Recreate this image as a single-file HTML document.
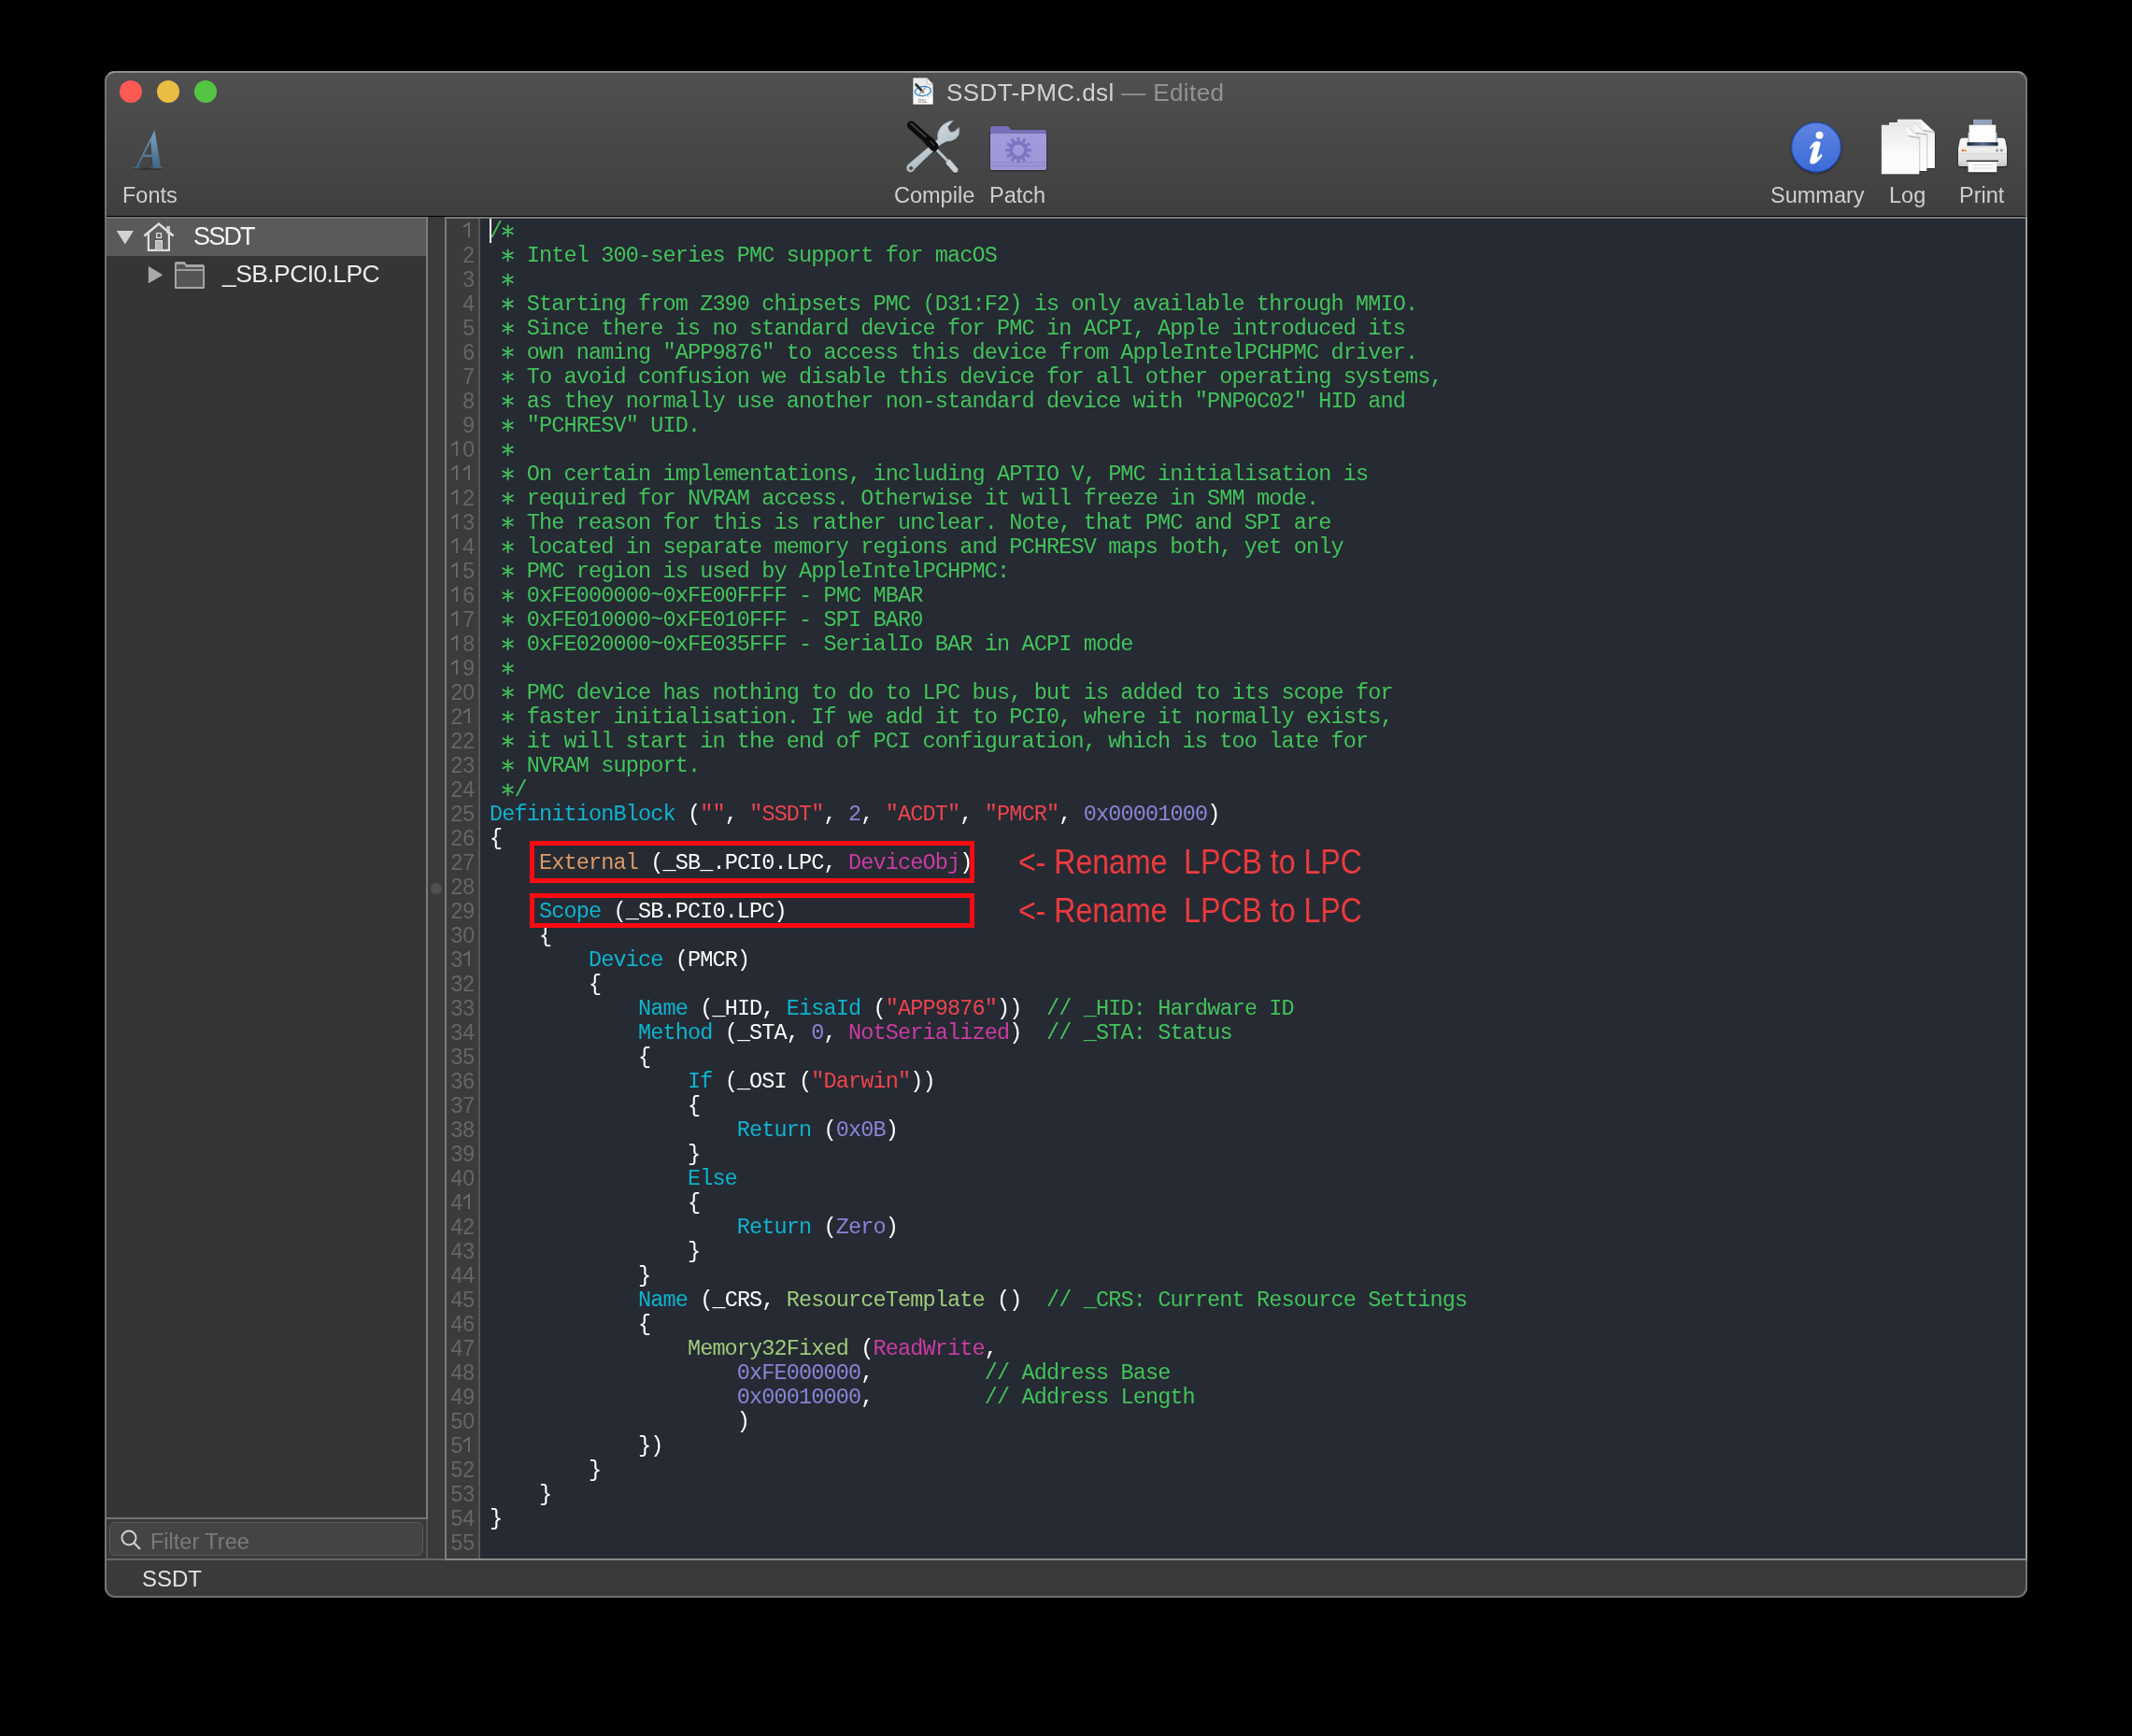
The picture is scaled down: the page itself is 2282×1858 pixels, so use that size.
<!DOCTYPE html>
<html><head><meta charset="utf-8">
<style>
html,body{margin:0;padding:0;background:#000;width:2282px;height:1858px;overflow:hidden;}
body{position:relative;font-family:"Liberation Sans",sans-serif;-webkit-font-smoothing:antialiased;}
.tlabel,.title,.code,.gut,.ann,.abs{will-change:transform;}
.abs{position:absolute;}
#win{position:absolute;left:112px;top:76px;width:2058px;height:1634px;border-radius:11px;background:#3a3a3a;overflow:hidden;}
#winborder{position:absolute;left:112px;top:76px;width:2054px;height:1630px;border:2px solid #767676;border-top-color:#8e8e8e;border-bottom-color:#6e6e6e;border-radius:11px;pointer-events:none;}
#toolbar{position:absolute;left:0;top:0;width:2058px;height:155px;background:linear-gradient(#505050,#3f3f3f);}
#tbline{position:absolute;left:0;top:155px;width:2058px;height:1px;background:#000;}
.title{position:absolute;top:84px;font-size:26px;letter-spacing:0.4px;color:#d2d2d2;white-space:nowrap;line-height:30px;}
.tlabel{position:absolute;top:196px;font-size:23.5px;color:#cfcfcf;white-space:nowrap;line-height:26px;}
#sidebar{position:absolute;left:114px;top:232px;width:342px;height:1392px;background:#353535;}
.code{position:absolute;left:524px;top:235px;font-family:"Liberation Mono",monospace;font-size:23.5px;letter-spacing:-0.86px;line-height:26px;color:#fff;white-space:pre;margin:0;}
.gut{position:absolute;left:478px;top:234px;width:30px;font-size:23px;line-height:26px;color:#666;text-align:right;white-space:pre;}
.ann{font-size:36.5px;line-height:40px;color:#f03b3e;white-space:nowrap;transform-origin:0 0;transform:scaleX(0.878);}
.ax{color:transparent}
.d1{display:inline-block;vertical-align:top;}
.c{color:#41c35a}.k{color:#0db4cf}.s{color:#f0434d}.n{color:#8a84d6}.o{color:#dc9a66}.m{color:#c93ca2}.g{color:#9dcb79}
</style></head><body>
<div id="win">
  <div id="toolbar"></div>
  <div id="tbline"></div>
</div>
<div id="winborder"></div>

<!-- traffic lights -->
<div class="abs" style="left:128px;top:86px;width:24px;height:24px;border-radius:50%;background:#fe5a54;"></div>
<div class="abs" style="left:168px;top:86px;width:24px;height:24px;border-radius:50%;background:#e9bd44;"></div>
<div class="abs" style="left:208px;top:86px;width:24px;height:24px;border-radius:50%;background:#54c443;"></div>


<!-- ICONS -->
<!-- title doc icon -->
<svg class="abs" style="left:970px;top:78px" width="40" height="40" viewBox="0 0 40 40">
 <defs><linearGradient id="docg" x1="0" y1="0" x2="0" y2="1"><stop offset="0" stop-color="#e6e6e6"/><stop offset="1" stop-color="#ffffff"/></linearGradient></defs>
 <path d="M7 5 L21.7 5 L29 12.4 L29 34 L7 34 Z" fill="url(#docg)" stroke="#3a3a3a" stroke-width="0.6"/>
 <path d="M21.7 5 L22.5 11.8 L29 12.4 Z" fill="#fafafa" stroke="#9a9a9a" stroke-width="0.6"/>
 <ellipse cx="17.9" cy="19.6" rx="8.6" ry="5" fill="none" stroke="#2f86d4" stroke-width="1.3" transform="rotate(-8 17.9 19.6)"/>
 <path d="M10.5 12.5 L17.5 20" stroke="#333" stroke-width="2.6" stroke-linecap="round"/>
 <path d="M13 24 L21.5 15" stroke="#aaa" stroke-width="1.4"/>
 <path d="M18 21 L24 26" stroke="#bbb" stroke-width="1"/>
 <text x="17.5" y="31.8" font-family="Liberation Sans" font-size="5" fill="#666" text-anchor="middle">DSL</text>
</svg>

<!-- Fonts A -->
<svg class="abs" style="left:140px;top:137px" width="40" height="46" viewBox="0 0 40 46">
 <defs><linearGradient id="ag" x1="0" y1="0" x2="0" y2="1"><stop offset="0" stop-color="#7aa2c4"/><stop offset="1" stop-color="#3f6686"/></linearGradient></defs>
 <ellipse cx="18.6" cy="43.6" rx="17.5" ry="1.2" fill="#222" opacity="0.6"/>
 <path d="M25.5 2.4 L32.1 41.9 L35.3 42.4 L35.3 43.3 L20.5 43.3 L20.5 42.4 L23.8 41.9 L22.8 30.9 L12.9 30.9 L7.8 41.9 L11.5 42.4 L11.5 43.3 L1.9 43.3 L1.9 42.4 L5.3 41.9 Z M21.3 14.2 L22.6 28.6 L14.1 28.6 Z" fill="url(#ag)" fill-rule="evenodd"/>
</svg>

<!-- Compile: screwdriver + wrench -->
<svg class="abs" style="left:965px;top:125px" width="70" height="65" viewBox="0 0 70 65">
 <defs>
  <linearGradient id="wg" x1="0" y1="0" x2="0.6" y2="1"><stop offset="0" stop-color="#dde9ef"/><stop offset="1" stop-color="#a7b3ba"/></linearGradient>
  <filter id="csh" x="-10%" y="-10%" width="120%" height="120%"><feDropShadow dx="0" dy="0.6" stdDeviation="0.6" flood-color="#000" flood-opacity="0.55"/></filter>
 </defs>
 <g filter="url(#csh)">
 <!-- wrench -->
 <path d="M6.5 51.5 L27 34 L35 28 L38.5 24 C38 20 38.5 16 41 12.5 C44 8 49.5 4.5 55.4 4.1 L49.8 10.5 C50 13.5 51 15.5 53.2 16.3 C56 16.5 58 14.5 61.4 11.2 C62.5 15 62 19 59.5 22 C56.5 25.5 52 26.5 48.7 26.2 C45 27.5 41 30.5 38.9 32.2 L24.2 46 L14 56 C12.5 59.5 9.5 60 7 58.5 C5 57 5 53.5 6.5 51.5 Z" fill="url(#wg)" stroke="#7c8a92" stroke-width="0.7"/>
 <circle cx="10.1" cy="55" r="2.1" fill="#454545" stroke="#7c8a92" stroke-width="0.5"/>
 <!-- screwdriver shaft + tip -->
 <path d="M36.5 34 L49.5 47.5" stroke="#b9c4ca" stroke-width="3" />
 <path d="M48.5 46.5 L51.5 45.5 L60.5 56 L59.5 59.5 L56 59.5 L47.5 50 Z" fill="#cdd3d6" stroke="#8c969c" stroke-width="0.5"/>
 <!-- handle -->
 <path d="M10.3 8.7 L27.5 24" stroke="#101010" stroke-width="8.6" stroke-linecap="round"/>
 <path d="M10 7.2 L26.5 22" stroke="#6a6a6a" stroke-width="1.4" stroke-linecap="round" opacity="0.7"/>
 <path d="M29 25.5 L34.8 32" stroke="#080808" stroke-width="9.6" stroke-linecap="round"/>
 <path d="M30.5 26 L35 30.5" stroke="#555" stroke-width="1.6" stroke-linecap="round" opacity="0.7"/>
 </g>
</svg>

<!-- Patch: purple folder with gear -->
<svg class="abs" style="left:1055px;top:130px" width="70" height="60" viewBox="0 0 70 60">
 <defs>
  <linearGradient id="fg" x1="0" y1="0" x2="0" y2="1"><stop offset="0" stop-color="#a29cdc"/><stop offset="1" stop-color="#9c96d6"/></linearGradient>
  <filter id="fsh" x="-10%" y="-10%" width="120%" height="130%"><feDropShadow dx="0" dy="0.8" stdDeviation="0.8" flood-color="#000" flood-opacity="0.5"/></filter>
 </defs>
 <g filter="url(#fsh)">
 <path d="M5 7 Q5 5 7 5 L23 5 Q24.5 5 25.5 6.5 L27 9 L63 9 Q65 9 65 11 L65 16 L5 16 Z" fill="#7670b6"/>
 <rect x="5" y="13" width="60" height="39" rx="2.5" fill="url(#fg)"/>
 </g>
 <path d="M5 44 L65 44 M5 47.5 L65 47.5" stroke="#8a84c4" stroke-width="1"/>
 <g transform="translate(35,30.7)" fill="#7d76c2">
  <circle r="9.9"/>
  <g id="teeth">
   <rect x="-1.55" y="-14" width="3.1" height="5.5" rx="1"/>
   <rect x="-1.55" y="-14" width="3.1" height="5.5" rx="1" transform="rotate(30)"/>
   <rect x="-1.55" y="-14" width="3.1" height="5.5" rx="1" transform="rotate(60)"/>
   <rect x="-1.55" y="-14" width="3.1" height="5.5" rx="1" transform="rotate(90)"/>
   <rect x="-1.55" y="-14" width="3.1" height="5.5" rx="1" transform="rotate(120)"/>
   <rect x="-1.55" y="-14" width="3.1" height="5.5" rx="1" transform="rotate(150)"/>
   <rect x="-1.55" y="-14" width="3.1" height="5.5" rx="1" transform="rotate(180)"/>
   <rect x="-1.55" y="-14" width="3.1" height="5.5" rx="1" transform="rotate(210)"/>
   <rect x="-1.55" y="-14" width="3.1" height="5.5" rx="1" transform="rotate(240)"/>
   <rect x="-1.55" y="-14" width="3.1" height="5.5" rx="1" transform="rotate(270)"/>
   <rect x="-1.55" y="-14" width="3.1" height="5.5" rx="1" transform="rotate(300)"/>
   <rect x="-1.55" y="-14" width="3.1" height="5.5" rx="1" transform="rotate(330)"/>
  </g>
  <circle r="6.0" fill="#a19bdb"/>
 </g>
</svg>

<!-- Summary: info circle -->
<svg class="abs" style="left:1910px;top:124px" width="70" height="70" viewBox="0 0 70 70">
 <defs>
  <linearGradient id="ig" x1="0" y1="0" x2="0" y2="1"><stop offset="0" stop-color="#5e85e1"/><stop offset="1" stop-color="#3b6ad7"/></linearGradient>
  <filter id="ish" x="-20%" y="-20%" width="140%" height="140%"><feDropShadow dx="0" dy="1" stdDeviation="1" flood-color="#000" flood-opacity="0.6"/></filter>
 </defs>
 <circle cx="34" cy="33.6" r="26.3" fill="url(#ig)" stroke="#1e4fc4" stroke-width="1.1" filter="url(#ish)"/>
 <circle cx="37.5" cy="20.8" r="4" fill="#fff"/>
 <path d="M27 34.3 C29 31 31 28 33.5 27.4 C36 27 38.8 27.6 38.6 29.8 L34.8 44.6 C36.2 43.8 38 42.3 39.7 40.4 L40.3 43.2 C37.5 47.5 33.5 51.5 29.8 51.6 C27.4 51.6 26.7 49.6 27.4 47 L31.3 32.8 C30.2 33.5 28.7 34.8 27.7 35.6 Z" fill="#fff"/>
</svg>

<!-- Log: stacked pages -->
<svg class="abs" style="left:2005px;top:120px" width="80" height="75" viewBox="0 0 80 75">
 <defs>
  <linearGradient id="pg" x1="0" y1="0" x2="0" y2="1"><stop offset="0" stop-color="#e9e9e9"/><stop offset="0.6" stop-color="#fbfbfb"/><stop offset="1" stop-color="#ffffff"/></linearGradient>
  <filter id="psh" x="-20%" y="-20%" width="140%" height="140%"><feDropShadow dx="0.5" dy="0.5" stdDeviation="0.6" flood-color="#000" flood-opacity="0.55"/></filter>
 </defs>
 <g filter="url(#psh)">
  <path d="M25.9 7.8 L51 7.8 L65.9 21.6 L65.9 60 L25.9 60 Z" fill="url(#pg)"/>
  <path d="M51 7.8 L53.5 19.5 L65.9 21.6 Z" fill="#f7f7f7"/>
  <path d="M53.5 19.5 L65.9 21.6" stroke="#9a9a9a" stroke-width="0.9"/>
 </g>
 <g filter="url(#psh)">
  <path d="M17 11 L42.8 11 L57.2 24 L57.2 63 L17 63 Z" fill="url(#pg)"/>
  <path d="M42.8 11 L45.5 22.3 L57.2 24 Z" fill="#f7f7f7"/>
  <path d="M45.5 22.3 L57.2 24" stroke="#9a9a9a" stroke-width="0.9"/>
 </g>
 <g filter="url(#psh)">
  <path d="M8.9 13.8 L34.1 13.8 L49.2 27.6 L49.2 66.3 L8.9 66.3 Z" fill="url(#pg)"/>
  <path d="M34.1 13.8 L37.5 25.6 L49.2 27.6 Z" fill="#f7f7f7"/>
  <path d="M37.5 25.6 L49.2 27.6" stroke="#9a9a9a" stroke-width="0.9"/>
 </g>
</svg>

<!-- Print: printer -->
<svg class="abs" style="left:2092px;top:124px" width="62" height="66" viewBox="0 0 62 66">
 <defs>
  <linearGradient id="prg" x1="0" y1="0" x2="0" y2="1"><stop offset="0" stop-color="#fafafa"/><stop offset="0.45" stop-color="#ededed"/><stop offset="0.8" stop-color="#dcdcdc"/><stop offset="1" stop-color="#c4c4c4"/></linearGradient>
  <linearGradient id="slot" x1="0" y1="0" x2="1" y2="0"><stop offset="0" stop-color="#17202e"/><stop offset="0.5" stop-color="#4f6a8e"/><stop offset="1" stop-color="#17202e"/></linearGradient>
  <filter id="prsh" x="-20%" y="-20%" width="140%" height="140%"><feDropShadow dx="0" dy="0.8" stdDeviation="0.8" flood-color="#000" flood-opacity="0.6"/></filter>
 </defs>
 <g filter="url(#prsh)">
  <rect x="20" y="3.9" width="20.1" height="5.8" fill="#93a3bd"/>
  <path d="M8.5 23.8 L51.5 23.8 Q53.5 23.8 54.2 26 L56 35 L56 51.5 Q56 54 53 54 L7 54 Q4 54 4 51.5 L4 35 L5.8 26 Q6.5 23.8 8.5 23.8 Z" fill="url(#prg)"/>
  <rect x="14.4" y="18" width="31.2" height="10.5" fill="#a9b8cc"/>
  <rect x="15.7" y="9.7" width="28.5" height="18.6" fill="#fdfdfd"/>
  <rect x="13.5" y="28.3" width="33.1" height="3.6" fill="url(#slot)"/>
  <rect x="13.5" y="31.9" width="33.1" height="1.6" fill="#d4d4d4"/>
  <rect x="14.7" y="48.8" width="30.5" height="11.3" fill="#fafafa"/>
 </g>
 <path d="M4.5 40.5 L55.5 40.5" stroke="#d6d6d6" stroke-width="1.2"/>
 <circle cx="8.9" cy="37" r="1.3" fill="#ee6a3c"/><circle cx="11.7" cy="37" r="1.3" fill="#f0a040"/>
 <circle cx="45.6" cy="37" r="1.1" fill="none" stroke="#555" stroke-width="0.7"/><circle cx="50.4" cy="37" r="1.1" fill="none" stroke="#555" stroke-width="0.7"/>
 <rect x="12.9" y="47.6" width="34.1" height="1.4" fill="#2a2a2a"/>
 <path d="M20 52.5 L41 52.5 M20 56 L41 56" stroke="#dadada" stroke-width="1.2"/>
</svg>

<!-- title -->
<div class="title" style="left:1013px;">SSDT-PMC.dsl <span style="color:#939393">— Edited</span></div>

<!-- toolbar labels -->
<div class="tlabel" style="left:131px;">Fonts</div>
<div class="tlabel" style="left:957px;">Compile</div>
<div class="tlabel" style="left:1059px;">Patch</div>
<div class="tlabel" style="left:1895px;">Summary</div>
<div class="tlabel" style="left:2022px;">Log</div>
<div class="tlabel" style="left:2097px;">Print</div>

<!-- sidebar -->
<div id="sidebar"></div>

<!-- gutter + code -->
<div class="abs" style="left:458px;top:232px;width:18px;height:1437px;background:#3a3a3a;"></div>
<div class="abs" style="left:476px;top:232px;width:1690px;height:1434px;border:2px solid #7a7a7a;border-right-color:#9a9a9a;border-bottom-color:#8a8a8a;border-left-color:#7a7a7a;background:#262a33;"></div>
<div class="abs" style="left:478px;top:234px;width:34px;height:1434px;background:#3b3b3b;"></div>
<div class="abs" style="left:512px;top:234px;width:2px;height:1434px;background:#575757;"></div>

<div class="gut"><svg class="d1" width="12.79" height="26" viewBox="0 0 12.79 26"><path d="M1.1 9 L7 4.8 L7 20" fill="none" stroke="#707070" stroke-width="1.7"/></svg>
2
3
4
5
6
7
8
9
<svg class="d1" width="12.79" height="26" viewBox="0 0 12.79 26"><path d="M1.1 9 L7 4.8 L7 20" fill="none" stroke="#707070" stroke-width="1.7"/></svg>0
<svg class="d1" width="12.79" height="26" viewBox="0 0 12.79 26"><path d="M1.1 9 L7 4.8 L7 20" fill="none" stroke="#707070" stroke-width="1.7"/></svg><svg class="d1" width="12.79" height="26" viewBox="0 0 12.79 26"><path d="M1.1 9 L7 4.8 L7 20" fill="none" stroke="#707070" stroke-width="1.7"/></svg>
<svg class="d1" width="12.79" height="26" viewBox="0 0 12.79 26"><path d="M1.1 9 L7 4.8 L7 20" fill="none" stroke="#707070" stroke-width="1.7"/></svg>2
<svg class="d1" width="12.79" height="26" viewBox="0 0 12.79 26"><path d="M1.1 9 L7 4.8 L7 20" fill="none" stroke="#707070" stroke-width="1.7"/></svg>3
<svg class="d1" width="12.79" height="26" viewBox="0 0 12.79 26"><path d="M1.1 9 L7 4.8 L7 20" fill="none" stroke="#707070" stroke-width="1.7"/></svg>4
<svg class="d1" width="12.79" height="26" viewBox="0 0 12.79 26"><path d="M1.1 9 L7 4.8 L7 20" fill="none" stroke="#707070" stroke-width="1.7"/></svg>5
<svg class="d1" width="12.79" height="26" viewBox="0 0 12.79 26"><path d="M1.1 9 L7 4.8 L7 20" fill="none" stroke="#707070" stroke-width="1.7"/></svg>6
<svg class="d1" width="12.79" height="26" viewBox="0 0 12.79 26"><path d="M1.1 9 L7 4.8 L7 20" fill="none" stroke="#707070" stroke-width="1.7"/></svg>7
<svg class="d1" width="12.79" height="26" viewBox="0 0 12.79 26"><path d="M1.1 9 L7 4.8 L7 20" fill="none" stroke="#707070" stroke-width="1.7"/></svg>8
<svg class="d1" width="12.79" height="26" viewBox="0 0 12.79 26"><path d="M1.1 9 L7 4.8 L7 20" fill="none" stroke="#707070" stroke-width="1.7"/></svg>9
20
2<svg class="d1" width="12.79" height="26" viewBox="0 0 12.79 26"><path d="M1.1 9 L7 4.8 L7 20" fill="none" stroke="#707070" stroke-width="1.7"/></svg>
22
23
24
25
26
27
28
29
30
3<svg class="d1" width="12.79" height="26" viewBox="0 0 12.79 26"><path d="M1.1 9 L7 4.8 L7 20" fill="none" stroke="#707070" stroke-width="1.7"/></svg>
32
33
34
35
36
37
38
39
40
4<svg class="d1" width="12.79" height="26" viewBox="0 0 12.79 26"><path d="M1.1 9 L7 4.8 L7 20" fill="none" stroke="#707070" stroke-width="1.7"/></svg>
42
43
44
45
46
47
48
49
50
5<svg class="d1" width="12.79" height="26" viewBox="0 0 12.79 26"><path d="M1.1 9 L7 4.8 L7 20" fill="none" stroke="#707070" stroke-width="1.7"/></svg>
52
53
54
55</div>

<pre class="code"><span class="c">/<span class="ax">*</span>
 <span class="ax">*</span> Intel 300-series PMC support for macOS
 <span class="ax">*</span>
 <span class="ax">*</span> Starting from Z390 chipsets PMC (D31:F2) is only available through MMIO.
 <span class="ax">*</span> Since there is no standard device for PMC in ACPI, Apple introduced its
 <span class="ax">*</span> own naming "APP9876" to access this device from AppleIntelPCHPMC driver.
 <span class="ax">*</span> To avoid confusion we disable this device for all other operating systems,
 <span class="ax">*</span> as they normally use another non-standard device with "PNP0C02" HID and
 <span class="ax">*</span> "PCHRESV" UID.
 <span class="ax">*</span>
 <span class="ax">*</span> On certain implementations, including APTIO V, PMC initialisation is
 <span class="ax">*</span> required for NVRAM access. Otherwise it will freeze in SMM mode.
 <span class="ax">*</span> The reason for this is rather unclear. Note, that PMC and SPI are
 <span class="ax">*</span> located in separate memory regions and PCHRESV maps both, yet only
 <span class="ax">*</span> PMC region is used by AppleIntelPCHPMC:
 <span class="ax">*</span> 0xFE000000~0xFE00FFFF - PMC MBAR
 <span class="ax">*</span> 0xFE010000~0xFE010FFF - SPI BAR0
 <span class="ax">*</span> 0xFE020000~0xFE035FFF - SerialIo BAR in ACPI mode
 <span class="ax">*</span>
 <span class="ax">*</span> PMC device has nothing to do to LPC bus, but is added to its scope for
 <span class="ax">*</span> faster initialisation. If we add it to PCI0, where it normally exists,
 <span class="ax">*</span> it will start in the end of PCI configuration, which is too late for
 <span class="ax">*</span> NVRAM support.
 <span class="ax">*</span>/</span>
<span class="k">DefinitionBlock</span> (<span class="s">""</span>, <span class="s">"SSDT"</span>, <span class="n">2</span>, <span class="s">"ACDT"</span>, <span class="s">"PMCR"</span>, <span class="n">0x00001000</span>)
{
    <span class="o">External</span> (_SB_.PCI0.LPC, <span class="m">DeviceObj</span>)

    <span class="k">Scope</span> (_SB.PCI0.LPC)
    {
        <span class="k">Device</span> (PMCR)
        {
            <span class="k">Name</span> (_HID, <span class="k">EisaId</span> (<span class="s">"APP9876"</span>))  <span class="c">// _HID: Hardware ID</span>
            <span class="k">Method</span> (_STA, <span class="n">0</span>, <span class="m">NotSerialized</span>)  <span class="c">// _STA: Status</span>
            {
                <span class="k">If</span> (_OSI (<span class="s">"Darwin"</span>))
                {
                    <span class="k">Return</span> (<span class="n">0x0B</span>)
                }
                <span class="k">Else</span>
                {
                    <span class="k">Return</span> (<span class="n">Zero</span>)
                }
            }
            <span class="k">Name</span> (_CRS, <span class="g">ResourceTemplate</span> ()  <span class="c">// _CRS: Current Resource Settings</span>
            {
                <span class="g">Memory32Fixed</span> (<span class="m">ReadWrite</span>,
                    <span class="n">0xFE000000</span>,         <span class="c">// Address Base</span>
                    <span class="n">0x00010000</span>,         <span class="c">// Address Length</span>
                    )
            })
        }
    }
}
</pre>


<!-- sidebar items -->
<div class="abs" style="left:112px;top:232px;width:346px;height:1394px;box-sizing:border-box;border:2px solid #727272;border-right-color:#7c7c7c;background:#353535;"></div>
<div class="abs" style="left:114px;top:234px;width:342px;height:40px;background:#5a5a5a;"></div>
<svg class="abs" style="left:124px;top:246px" width="20" height="17"><polygon points="0.8,0.9 18.9,0.9 9.9,15.5" fill="#d2d2d2"/></svg>
<svg class="abs" style="left:152px;top:237px" width="36" height="34" viewBox="0 0 36 34">
 <path d="M5.8 13.5 L17.9 3.5 L30 13.5 L30 31 L5.8 31 Z" fill="#5c5f5f"/>
 <rect x="26.3" y="5" width="3.7" height="8" fill="#c9c9c9"/>
 <path d="M2.4 15.6 L17.9 2.6 L33.6 15.6" fill="none" stroke="#dedede" stroke-width="2.6" stroke-linejoin="miter"/>
 <path d="M6.9 13 L6.9 30.8 L28.9 30.8 L28.9 13" fill="none" stroke="#dedede" stroke-width="2.2"/>
 <rect x="15.7" y="12.6" width="4.8" height="4.8" fill="#555" stroke="#dedede" stroke-width="1.3"/>
 <rect x="14.7" y="20.5" width="6.8" height="10.5" fill="#bababa" stroke="#dedede" stroke-width="1"/>
</svg>
<svg class="abs" style="left:158px;top:284px" width="17" height="20"><polygon points="0.9,0.9 15.8,10 0.9,19.2" fill="#b4b4b4"/></svg>
<svg class="abs" style="left:185.5px;top:280px" width="34" height="30" viewBox="0 0 35 30" preserveAspectRatio="none">
 <path d="M2 2.2 Q2 1.2 3 1.2 L11.5 1.2 L13.8 4.2 L32 4.2 Q33 4.2 33 5.2 L33 27.2 Q33 28.2 32 28.2 L3 28.2 Q2 28.2 2 27.2 Z" fill="#3e4040" stroke="#c4c4c4" stroke-width="1.8"/>
 <rect x="2.9" y="8.4" width="29.2" height="19" fill="#5a5d5d"/>
 <path d="M2 8.4 L33 8.4" stroke="#c4c4c4" stroke-width="1.6"/>
</svg>
<div class="abs" style="left:207px;top:238px;font-size:27px;line-height:30px;letter-spacing:-1.8px;color:#f4f4f4;">SSDT</div>
<svg class="abs" style="left:158px;top:285px" width="17" height="19"><polygon points="1,1 16,9.5 1,18" fill="#a9a9a9"/></svg>
<svg class="abs" style="left:185.5px;top:280px" width="34" height="30" viewBox="0 0 35 30" preserveAspectRatio="none">
 <path d="M2 3 Q2 2 3 2 L12 2 L14 5 L32 5 Q33 5 33 6 L33 27 Q33 28 32 28 L3 28 Q2 28 2 27 Z" fill="#555" stroke="#a6a6a6" stroke-width="2"/>
 <path d="M2 9 L33 9" stroke="#a6a6a6" stroke-width="1.8"/>
</svg>
<div class="abs" style="left:238px;top:278px;font-size:26.5px;line-height:30px;letter-spacing:-0.6px;color:#ececec;">_SB.PCI0.LPC</div>

<!-- filter area -->
<div class="abs" style="left:117px;top:1629px;width:336px;height:36px;box-sizing:border-box;border:1.5px solid #5a5a5a;border-radius:6px;background:#444;"></div>
<svg class="abs" style="left:128px;top:1636px" width="26" height="26" viewBox="0 0 26 26"><circle cx="10" cy="10" r="7.5" fill="none" stroke="#d0d0d0" stroke-width="2"/><path d="M15.5 15.5 L22 22" stroke="#d0d0d0" stroke-width="2.2"/></svg>
<div class="abs" style="left:161px;top:1637px;font-size:23.5px;line-height:26px;color:#7a7a7a;">Filter Tree</div>
<div class="abs" style="left:114px;top:1668px;width:362px;height:2px;background:#666;"></div>
<div class="abs" style="left:456px;top:1626px;width:2px;height:42px;background:#555;"></div>
<div class="abs" style="left:152px;top:1676px;font-size:24px;line-height:28px;color:#e2e2e2;">SSDT</div>

<!-- divider dot -->
<div class="abs" style="left:461px;top:945px;width:12px;height:12px;border-radius:50%;background:#505050;"></div>

<!-- asterisks -->
<svg class="abs" style="left:530px;top:234px" width="30" height="640" viewBox="0 0 30 640">
<defs><g id="ast" stroke="#44c35d" stroke-width="1.8" stroke-linecap="round"><path d="M0 -6.0 L0 6.0 M-5.2 -3.0 L5.2 3.0 M-5.2 3.0 L5.2 -3.0"/></g></defs>
<use href="#ast" x="13.6" y="13.3"/><use href="#ast" x="13.6" y="39.3"/><use href="#ast" x="13.6" y="65.3"/><use href="#ast" x="13.6" y="91.3"/><use href="#ast" x="13.6" y="117.3"/><use href="#ast" x="13.6" y="143.3"/><use href="#ast" x="13.6" y="169.3"/><use href="#ast" x="13.6" y="195.3"/><use href="#ast" x="13.6" y="221.3"/><use href="#ast" x="13.6" y="247.3"/><use href="#ast" x="13.6" y="273.3"/><use href="#ast" x="13.6" y="299.3"/><use href="#ast" x="13.6" y="325.3"/><use href="#ast" x="13.6" y="351.3"/><use href="#ast" x="13.6" y="377.3"/><use href="#ast" x="13.6" y="403.3"/><use href="#ast" x="13.6" y="429.3"/><use href="#ast" x="13.6" y="455.3"/><use href="#ast" x="13.6" y="481.3"/><use href="#ast" x="13.6" y="507.3"/><use href="#ast" x="13.6" y="533.3"/><use href="#ast" x="13.6" y="559.3"/><use href="#ast" x="13.6" y="585.3"/><use href="#ast" x="13.6" y="611.3"/></svg>
<!-- caret -->
<div class="abs" style="left:524px;top:234px;width:2px;height:26px;background:#fff;"></div>

<!-- red boxes -->
<div class="abs" style="left:567px;top:900px;width:476px;height:45px;box-sizing:border-box;border:5px solid #ff0a12;"></div>
<div class="abs" style="left:567px;top:956px;width:476px;height:37px;box-sizing:border-box;border:5px solid #ff0a12;"></div>
<div class="abs ann" style="left:1090px;top:903px;">&lt;- Rename&nbsp; LPCB to LPC</div>
<div class="abs ann" style="left:1090px;top:955px;">&lt;- Rename&nbsp; LPCB to LPC</div>
</body></html>
